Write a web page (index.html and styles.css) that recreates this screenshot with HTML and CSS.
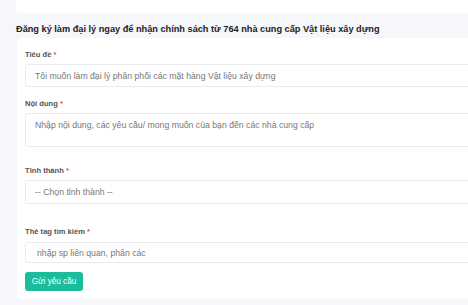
FILE: index.html
```html
<!DOCTYPE html>
<html lang="vi">
<head>
  <meta charset="UTF-8" />
  <meta name="viewport" content="width=device-width, initial-scale=1.0"/>
  <title>Đăng ký làm đại lý</title>
  <link rel="stylesheet" href="styles.css">
</head>
<body>
  <div class="page">
    <div class="box box-top"></div>

    <h2 class="title">Đăng ký làm đại lý ngay để nhận chính sách từ 764 nhà cung cấp Vật liệu xây dựng</h2>

    <form class="box request-form">
      <div class="form-group">
        <label for="req-title">Tiêu đề <span class="req">*</span></label>
        <input type="text" id="req-title" placeholder="Tôi muốn làm đại lý phân phối các mặt hàng Vật liệu xây dựng" />
      </div>

      <div class="form-group spaced">
        <label for="req-content">Nội dung <span class="req">*</span></label>
        <textarea id="req-content" placeholder="Nhập nội dung, các yêu cầu/ mong muốn của bạn đến các nhà cung cấp"></textarea>
      </div>

      <div class="form-group spaced-lg">
        <label for="req-province">Tỉnh thành <span class="req">*</span></label>
        <select id="req-province">
          <option value="">-- Chọn tỉnh thành --</option>
        </select>
      </div>

      <div class="form-group last">
        <label for="req-tags" class="tag-label">Thẻ tag tìm kiếm <span class="req">*</span></label>
        <input type="text" id="req-tags" class="tag-input" placeholder="nhập sp liên quan, phân các" />
      </div>

      <button type="submit">Gửi yêu cầu</button>
    </form>
  </div>
</body>
</html>
```

FILE: styles.css
```css
html, body {
  overflow: hidden;
}

body {
  margin: 0;
  font-family: "Liberation Sans", Arial, sans-serif;
  background: #f6f7fb;
  color: #333;
}

.page {
  width: 560px;
  padding: 0 0 0 16px;
}

.box {
  background: #fff;
  border-radius: 4px;
}

.box-top {
  height: 13px;
  border-radius: 0 0 4px 4px;
}

.title {
  margin: 0;
  padding: 10px 0 0 0;
  font-size: 9.2px;
  line-height: 12px;
  font-weight: bold;
  color: #222;
}

.request-form {
  margin-top: 3px;
  margin-left: 1px;
  padding: 12px 8px 8px 8px;
}

.form-group {
  margin-bottom: 12px;
}

.form-group.spaced {
  margin-bottom: 19px;
}

.form-group.spaced-lg {
  margin-bottom: 23px;
}

.form-group.last {
  margin-bottom: 9px;
}

label {
  display: block;
  font-size: 7.6px;
  line-height: 9px;
  font-weight: bold;
  color: #555;
  margin-bottom: 5px;
}

label.tag-label {
  margin-bottom: 6px;
}

.req {
  color: #e74c3c;
}

input[type="text"], textarea, select {
  display: block;
  box-sizing: border-box;
  width: 100%;
  border: 1px solid #eaebf1;
  border-radius: 3px;
  background: #fff;
  font-family: "Liberation Sans", Arial, sans-serif;
  font-size: 8.7px;
  color: #666;
  padding: 0 9px;
  outline: none;
}

input[type="text"] {
  height: 23px;
}

input.tag-input {
  height: 21px;
  padding-left: 11px;
}

textarea {
  height: 34px;
  padding-top: 6px;
  resize: none;
}

select {
  height: 24px;
  appearance: none;
  -webkit-appearance: none;
  color: #777;
}

::placeholder {
  color: #777;
}

button[type="submit"] {
  display: block;
  background: #1abc9c;
  color: #fff;
  border: none;
  border-radius: 3px;
  height: 19px;
  width: 58px;
  padding: 0;
  font-family: "Liberation Sans", Arial, sans-serif;
  font-size: 8.2px;
  cursor: pointer;
}
```
